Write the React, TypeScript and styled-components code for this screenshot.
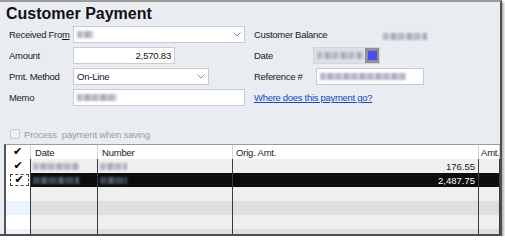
import styled, { createGlobalStyle } from "styled-components";

const GlobalStyle = createGlobalStyle`
	body {
		margin: 0;
		background: #ffffff;
		font-family: "Liberation Sans", Arial, sans-serif;
	}
`;

const Window = styled.div`
	width: 502px;
	height: 236px;
	box-sizing: border-box;
	display: flex;
	flex-direction: column;
	overflow: hidden;

	background: #e9ecf1;
	border-top: 2px solid #9c9c9c;
	border-right: 2px solid #4e4e4e;
	border-bottom: 2px solid #4e4e4e;
	box-shadow: 2px 2px 2px rgba(0, 0, 0, 0.3);
`;

const Title = styled.h1`
	margin: 0;
	padding: 2px 0 0 6px;
	height: 22px;
	box-sizing: border-box;
	line-height: 20px;
	font-size: 16px;
	font-weight: bold;
	color: #111;
`;

const Form = styled.div`
	display: flex;
	gap: 9px;
	padding-left: 9px;
	margin-top: 2px;
`;

const Column = styled.div<{ $width: number }>`
	display: flex;
	flex-direction: column;
	gap: 4px;
	width: ${(p) => p.$width}px;
`;

const Row = styled.div`
	display: flex;
	align-items: center;
	height: 17px;
`;

const Label = styled.span<{ $width?: number }>`
	flex: none;
	width: ${(p) => (p.$width ? `${p.$width}px` : "auto")};
	font-size: 9.5px;
	letter-spacing: -0.3px;
	color: #1b1b1b;
	white-space: nowrap;

	& u {
		text-decoration: underline;
	}
`;

const TextBox = styled.div<{ $width: number; $align?: string; $inset?: number }>`
	width: ${(p) => p.$width}px;
	height: 17px;
	margin-left: ${(p) => p.$inset ?? 0}px;
	box-sizing: border-box;
	display: flex;
	align-items: center;
	justify-content: ${(p) => p.$align ?? "flex-start"};
	padding: 0 3px;
	gap: 4px;

	background: #ffffff;
	border: 1px solid #c8ccd2;
	font-size: 9.5px;
	letter-spacing: -0.2px;
	color: #111;
`;

const Chevron = styled.svg`
	margin-left: auto;
	flex: none;
`;

const Smudge = styled.span<{ $width: number; $dark?: boolean }>`
	display: inline-block;
	flex: none;
	width: ${(p) => p.$width}px;
	height: 7px;
	background: ${(p) =>
		p.$dark
			? "repeating-linear-gradient(90deg, #3d4650 0 6px, #2a3038 6px 9px, #56606a 9px 13px, #343a40 13px 17px)"
			: "repeating-linear-gradient(90deg, #b6b7c6 0 5px, #d2d2dc 5px 8px, #a7a9ba 8px 12px, #c6c3cf 12px 16px)"};
	filter: blur(0.8px);
`;

const DateBox = styled.div`
	width: 67px;
	height: 17px;
	box-sizing: border-box;
	display: flex;
	align-items: center;
	padding-left: 3px;

	background: #dde1e7;
	border: 1px solid #d2d6dc;
`;

const CalendarButton = styled.span`
	margin-left: auto;
	width: 14px;
	height: 15px;
	display: flex;
	align-items: center;
	justify-content: center;
	background: #8d9097;

	&::after {
		content: "";
		width: 9px;
		height: 9px;
		background: #4a4cf2;
	}
`;

const BalanceValue = styled.span`
	margin-left: auto;
`;

const Link = styled.a`
	font-size: 9.5px;
	letter-spacing: -0.3px;
	color: #1846c4;
	text-decoration: underline;
	white-space: nowrap;
`;

const ProcessRow = styled.div`
	display: flex;
	align-items: center;
	gap: 4px;
	height: 12px;
	margin-top: 22px;
	padding-left: 10px;
`;

const CheckBox = styled.span`
	width: 10px;
	height: 10px;
	box-sizing: border-box;
	border: 1px solid #c6c9ce;
	border-radius: 2px;
	background: #eef0f3;
`;

const DisabledText = styled.span`
	font-size: 9.5px;
	letter-spacing: -0.2px;
	color: #9a9ea5;
	white-space: pre;
`;

const Grid = styled.div`
	flex: 1;
	margin: 4px 0 0 4px;
	overflow: hidden;
	background: #ffffff;
	border-top: 1px solid #9c9c9c;
	border-left: 2px solid #555;
`;

const GridRow = styled.div`
	display: grid;
	grid-template-columns: 25px 67px 135px 246px 1fr;
	height: 14px;
`;

const HeadCell = styled.div<{ $pad?: number }>`
	display: flex;
	align-items: center;
	padding-left: ${(p) => p.$pad ?? 4}px;
	border-right: 1px solid #d4d4d4;
	font-size: 9.5px;
	letter-spacing: -0.2px;
	color: #1b1b1b;
	white-space: nowrap;
	overflow: hidden;
`;

const Cell = styled.div<{ $bg: string; $right?: boolean }>`
	display: flex;
	align-items: center;
	justify-content: ${(p) => (p.$right ? "flex-end" : "flex-start")};
	padding: 0 3px 0 2px;
	background: ${(p) => p.$bg};
	border-right: 1px solid #3a3a3a;
	font-size: 9.5px;
	color: ${(p) => (p.$bg === "#0c0c0c" ? "#ffffff" : "#1b1b1b")};
	overflow: visible;
`;

const CheckCell = styled.div<{ $bg: string }>`
	display: flex;
	align-items: center;
	justify-content: center;
	background: ${(p) => p.$bg};
	border-right: 1px solid #3a3a3a;
`;

const Tick = styled.span`
	font-family: "DejaVu Sans", sans-serif;
	font-size: 11px;
	line-height: 12px;
	height: 12px;
	color: #000;
`;

const FocusBox = styled.span`
	width: 19px;
	height: 12px;
	margin-left: 2px;
	box-sizing: border-box;
	display: flex;
	align-items: center;
	justify-content: center;
	overflow: visible;
	border: 1px dashed #444;
`;

type Line = { checked: boolean; selected: boolean; amount: string };

const lines: Line[] = [
	{ checked: true, selected: false, amount: "176.55" },
	{ checked: true, selected: true, amount: "2,487.75" },
	{ checked: false, selected: false, amount: "" },
	{ checked: false, selected: false, amount: "" },
	{ checked: false, selected: false, amount: "" },
	{ checked: false, selected: false, amount: "" },
];

function ChevronIcon() {
	return (
		<Chevron width="8" height="5" viewBox="0 0 8 5">
			<polyline points="0.5,0.5 4,4 7.5,0.5" fill="none" stroke="#8e9299" strokeWidth="1" />
		</Chevron>
	);
}

export default function App(): JSX.Element {
	const makeRows = lines.map((line, index) => {
		const dark = index % 2 === 1;
		const bg = line.selected ? "#0c0c0c" : dark ? "#dedede" : "#efefef";
		const checkBg = dark && !line.selected ? "#edf3fa" : "#ffffff";
		const tick = line.checked ? <Tick>✔</Tick> : null;

		return (
			<GridRow key={index}>
				<CheckCell $bg={checkBg}>{line.selected ? <FocusBox>{tick}</FocusBox> : tick}</CheckCell>
				<Cell $bg={bg}>{line.amount ? <Smudge $width={46} $dark={line.selected} /> : null}</Cell>
				<Cell $bg={bg}>{line.amount ? <Smudge $width={27} $dark={line.selected} /> : null}</Cell>
				<Cell $bg={bg} $right>{line.amount}</Cell>
				<Cell $bg={bg} />
			</GridRow>
		);
	});

	return (
		<>
			<GlobalStyle />
			<Window>
				<Title>Customer Payment</Title>

				<Form>
					<Column $width={236}>
						<Row>
							<Label $width={64}>Received Fro<u>m</u></Label>
							<TextBox $width={172}>
								<Smudge $width={16} />
								<ChevronIcon />
							</TextBox>
						</Row>
						<Row>
							<Label $width={64}>Amount</Label>
							<TextBox $width={102} $align="flex-end">2,570.83</TextBox>
						</Row>
						<Row>
							<Label $width={64}>Pmt. Method</Label>
							<TextBox $width={136}>
								On-Line
								<ChevronIcon />
							</TextBox>
						</Row>
						<Row>
							<Label $width={64}>Memo</Label>
							<TextBox $width={172}>
								<Smudge $width={40} />
							</TextBox>
						</Row>
					</Column>

					<Column $width={173}>
						<Row>
							<Label>Customer Balance</Label>
							<BalanceValue>
								<Smudge $width={44} />
							</BalanceValue>
						</Row>
						<Row>
							<Label $width={59}>Date</Label>
							<DateBox>
								<Smudge $width={46} />
								<CalendarButton />
							</DateBox>
						</Row>
						<Row>
							<Label $width={59}>Reference #</Label>
							<TextBox $width={108} $inset={3}>
								<Smudge $width={86} />
							</TextBox>
						</Row>
						<Row>
							<Link href="#">Where does this payment go?</Link>
						</Row>
					</Column>
				</Form>

				<ProcessRow>
					<CheckBox />
					<DisabledText>Process  payment when saving</DisabledText>
				</ProcessRow>

				<Grid>
					<GridRow>
						<HeadCell $pad={7}><Tick>✔</Tick></HeadCell>
						<HeadCell>Date</HeadCell>
						<HeadCell>Number</HeadCell>
						<HeadCell $pad={3}>Orig. Amt.</HeadCell>
						<HeadCell $pad={2}>Amt.</HeadCell>
					</GridRow>
					{makeRows}
				</Grid>
			</Window>
		</>
	);
}
